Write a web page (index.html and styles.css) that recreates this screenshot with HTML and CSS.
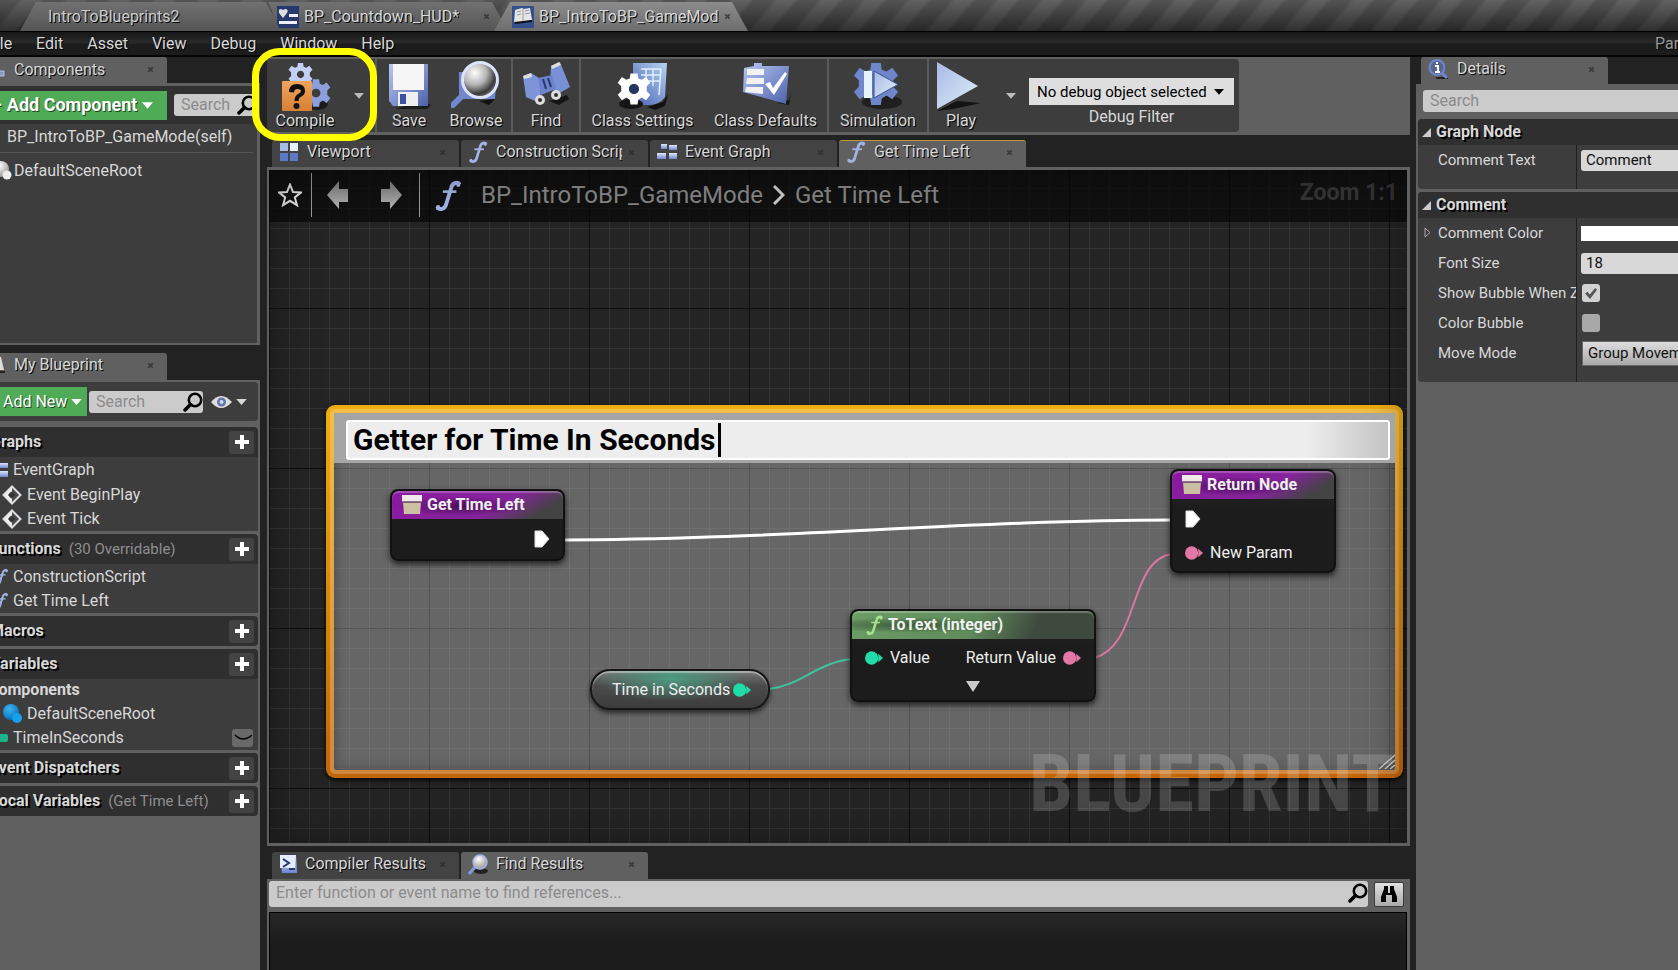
FILE: index.html
```html
<!DOCTYPE html>
<html lang="en">
<head>
<meta charset="utf-8">
<title>Blueprint Editor</title>
<link rel="stylesheet" href="styles.css">
</head>
<body>
<svg class="defs" width="0" height="0" aria-hidden="true">
  <defs>
    <linearGradient id="blue" x1="0" y1="0" x2="1" y2="1"><stop offset="0" stop-color="#b9c9f2"/><stop offset="1" stop-color="#4c61ad"/></linearGradient>
    <linearGradient id="blueDown" x1="0" y1="0" x2="0" y2="1"><stop offset="0" stop-color="#dfe8ff"/><stop offset="1" stop-color="#6d86cf"/></linearGradient>
    <linearGradient id="sheet" x1="0" y1="1" x2="1" y2="0"><stop offset="0" stop-color="#4a60b4"/><stop offset="1" stop-color="#b5d4f0"/></linearGradient>
    <linearGradient id="play" x1="0" y1="0" x2="1" y2="1"><stop offset="0" stop-color="#a9b8e4"/><stop offset="1" stop-color="#dcf0fa"/></linearGradient>
    <linearGradient id="orange" x1="0" y1="0" x2="0" y2="1"><stop offset="0" stop-color="#f0a45c"/><stop offset="1" stop-color="#d77f35"/></linearGradient>
    <linearGradient id="arrow" x1="0" y1="0" x2="0" y2="1"><stop offset="0" stop-color="#777"/><stop offset="1" stop-color="#b5b5b5"/></linearGradient>
    <radialGradient id="lens" cx=".35" cy=".3" r=".75"><stop offset="0" stop-color="#fff"/><stop offset=".45" stop-color="#b5b5b5"/><stop offset=".8" stop-color="#3a3a3a"/><stop offset="1" stop-color="#777"/></radialGradient>
    <radialGradient id="ballGrey" cx=".4" cy=".3" r=".7"><stop offset="0" stop-color="#fff"/><stop offset="1" stop-color="#999"/></radialGradient>
    <radialGradient id="ballBlue" cx=".4" cy=".3" r=".7"><stop offset="0" stop-color="#3cb4f5"/><stop offset="1" stop-color="#0773bd"/></radialGradient>
    <symbol id="close" viewBox="0 0 8 8"><path d="M1.500 1.500l5 5M6.500 1.500l-5 5" stroke="#2a2a2a" stroke-width="2"/></symbol>
    <symbol id="caret" viewBox="0 0 12 8"><path d="M0 1h12L6 8z" fill="currentColor"/></symbol>
    <symbol id="func" viewBox="0 0 20 24"><path d="M19 3.500C18 1.500 13.500 1.500 12.500 6L8.500 19C7.500 23 3.500 23 1.500 21.500" fill="none" stroke="currentColor" stroke-width="3"/><path d="M6 9h10.500" stroke="currentColor" stroke-width="2"/><circle cx="18" cy="3.800" r="1.600" fill="currentColor"/><circle cx="2.300" cy="21" r="1.700" fill="currentColor"/></symbol>
    <symbol id="search" viewBox="0 0 20 20"><circle cx="12" cy="8" r="6.200" fill="none" stroke="#000" stroke-width="2.600"/><path d="M7.500 12.500L2 18" stroke="#000" stroke-width="3.500" stroke-linecap="round"/></symbol>
    <symbol id="gear" viewBox="0 0 48 48"><path fill-rule="evenodd" d="M19 2h10l1 7 5 2 6-4 6 8-5 5 0 7 5 5-6 8-6-4-5 3-1 7H19l-1-7-5-3-6 4-6-8 5-5v-7l-5-5 6-8 6 4 5-2zM24 17a7 7 0 1 0 .1 0z"/></symbol>
    <symbol id="plus" viewBox="0 0 14 14"><path d="M7 0v14M0 7h14" stroke="#fff" stroke-width="4"/></symbol>
    <symbol id="event" viewBox="0 0 20 20"><path d="M10 1.500L18.500 10 10 18.500 1.500 10z" fill="#4a4a4a" stroke="#ddd" stroke-width="2"/><path d="M10 2L2 10l8 8z" fill="#eee"/><path d="M9 6.500L13.500 10 9 13.500 6 10z" fill="#333"/></symbol>
    <symbol id="graph" viewBox="0 0 20 18"><g fill="url(#blueDown)"><rect x="4" y="1" width="6" height="5"/><rect x="12" y="2" width="8" height="5"/><rect x="0" y="10" width="9" height="6"/><rect x="12" y="10" width="8" height="6"/></g></symbol>
    <symbol id="box" viewBox="0 0 20 20"><path d="M0 0h20v6.500H0z" fill="#f0ebe8"/><path d="M1 7.500h18L18 19H2z" fill="#cbc0a2"/><path d="M0 6.500h20v1.200H0z" fill="#6c5a62"/></symbol>
    <symbol id="exec" viewBox="0 0 16 18"><path d="M1 1h7l7 8-7 8H1z" fill="#fff" stroke="#ddd" stroke-width="1"/></symbol>
    <symbol id="pin" viewBox="0 0 19 14"><circle cx="7" cy="7" r="7" fill="currentColor"/><path d="M14 2.500L19 7l-5 4.500z" fill="currentColor"/></symbol>
  </defs>
</svg>

<header class="titlebar">
  <div class="wtab wtab-level"><span>IntroToBlueprints2</span></div>
  <div class="wtab wtab-hud">
    <svg width="22" height="22" viewBox="0 0 22 22"><path d="M0 0h22v22H0z" fill="#27396a"/><path d="M6 12L2 7q-1-4 2-4l2 1 2-1q4 0 2 4z" fill="#ddd"/><path d="M12 8h9v3h-9zM2 15h18v3H2z" fill="#eef"/></svg>
    <span>BP_Countdown_HUD*</span>
    <button class="close" aria-label="Close tab"><svg width="7" height="7"><use href="#close"/></svg></button>
  </div>
  <div class="wtab wtab-mode">
    <svg width="22" height="22" viewBox="0 0 22 22"><path d="M0 0h22v22H0z" fill="#33508d"/><path d="M3 4l7-2 2 1 6-1 2 12-7 1-2 1-9 1z" fill="#e6e6e6"/><path d="M11 3v12M5 6l4-1M5 9l4-1M13 5l4-1M13 8l5-1" stroke="#999"/><path d="M2 16l18-2v2L3 18z" fill="#111"/></svg>
    <span>BP_IntroToBP_GameMod</span>
    <button class="close" aria-label="Close tab"><svg width="7" height="7"><use href="#close"/></svg></button>
  </div>
</header>

<nav class="menubar">
  <a href="#">File</a><a href="#">Edit</a><a href="#">Asset</a><a href="#">View</a><a href="#">Debug</a><a href="#">Window</a><a href="#">Help</a>
  <span class="parent">Parent</span>
</nav>

<main class="workspace">
  <aside class="left">
    <section class="components">
      <div class="ptab ptab-left active">
        <svg width="18" height="20" viewBox="0 0 18 20"><path d="M4 3h7v6H4zM9 11h7v5H9zM6 9v5h4" fill="#8796c5" stroke="#b7c2e5"/></svg>
        <span>Components</span>
        <button class="close" aria-label="Close tab"><svg width="7" height="7"><use href="#close"/></svg></button>
      </div>
      <div class="comp-panel">
        <div class="comp-tools">
          <button class="green add-comp"><span>+</span><span>Add Component</span><svg width="11" height="8"><use href="#caret"/></svg></button>
          <label class="search"><input type="text" placeholder="Search" aria-label="Search components"><svg width="20" height="20"><use href="#search"/></svg></label>
        </div>
        <div class="comp-self">BP_IntroToBP_GameMode(self)</div>
        <div class="comp-root"><svg width="20" height="20" viewBox="0 0 20 20"><circle cx="9" cy="8" r="8" fill="url(#ballGrey)"/><circle cx="15" cy="14" r="4.500" fill="#eee"/></svg>DefaultSceneRoot</div>
      </div>
    </section>

    <section class="myblueprint">
      <div class="ptab ptab-left active">
        <svg width="18" height="20" viewBox="0 0 18 20"><path d="M3 2h10l3 13H3z" fill="#ddd"/><path d="M3 16h14v2H3z" fill="#222"/></svg>
        <span>My Blueprint</span>
        <button class="close" aria-label="Close tab"><svg width="7" height="7"><use href="#close"/></svg></button>
      </div>
      <div class="bp-panel">
        <div class="bp-tools">
          <button class="green add-new"><span>Add New</span><svg width="11" height="7"><use href="#caret"/></svg></button>
          <label class="search"><input type="text" placeholder="Search" aria-label="Search blueprint"><svg width="20" height="20"><use href="#search"/></svg></label>
          <button class="eye" aria-label="View options">
            <svg width="21" height="14" viewBox="0 0 21 14"><path d="M0 7Q10-5 21 7 10 19 0 7z" fill="#ddd"/><circle cx="10.500" cy="7" r="4.500" fill="#6476a8"/><circle cx="10.500" cy="7" r="2" fill="#cfd8f5"/></svg>
            <svg width="11" height="7"><use href="#caret"/></svg>
          </button>
        </div>
        <div class="cat"><b>Graphs</b><button class="plus" aria-label="Add graph"><svg width="14" height="14"><use href="#plus"/></svg></button></div>
        <ul class="rows">
          <li class="lvl1"><svg width="20" height="18"><use href="#graph"/></svg>EventGraph</li>
          <li class="lvl2"><svg width="20" height="20"><use href="#event"/></svg>Event BeginPlay</li>
          <li class="lvl2"><svg width="20" height="20"><use href="#event"/></svg>Event Tick</li>
        </ul>
        <div class="cat"><b>Functions</b><small>(30 Overridable)</small><button class="plus" aria-label="Add function"><svg width="14" height="14"><use href="#plus"/></svg></button></div>
        <ul class="rows rows-func">
          <li class="lvl1"><svg class="fn" width="14" height="18"><use href="#func"/></svg>ConstructionScript</li>
          <li class="lvl1"><svg class="fn" width="14" height="18"><use href="#func"/></svg>Get Time Left</li>
        </ul>
        <div class="cat"><b>Macros</b><button class="plus" aria-label="Add macro"><svg width="14" height="14"><use href="#plus"/></svg></button></div>
        <div class="cat"><b>Variables</b><button class="plus" aria-label="Add variable"><svg width="14" height="14"><use href="#plus"/></svg></button></div>
        <ul class="rows rows-vars">
          <li class="lvl0"><b>Components</b></li>
          <li class="lvl2"><svg width="20" height="20" viewBox="0 0 20 20"><circle cx="9" cy="8" r="8" fill="url(#ballBlue)"/><circle cx="15" cy="14" r="5" fill="#16a0f0"/></svg>DefaultSceneRoot</li>
          <li class="lvl1"><svg width="20" height="8"><rect width="20" height="8" rx="2" fill="#1cb38a"/></svg>TimeInSeconds<button class="lid" aria-label="Toggle visibility"><svg width="18" height="8" viewBox="0 0 18 8"><path d="M1 1q8 8 17 0" fill="none" stroke="#000" stroke-width="1.500"/></svg></button></li>
        </ul>
        <div class="cat"><b>Event Dispatchers</b><button class="plus" aria-label="Add dispatcher"><svg width="14" height="14"><use href="#plus"/></svg></button></div>
        <div class="cat"><b>Local Variables</b><small>(Get Time Left)</small><button class="plus" aria-label="Add local variable"><svg width="14" height="14"><use href="#plus"/></svg></button></div>
      </div>
    </section>
  </aside>

  <section class="center">
    <div class="toolbar">
      <div class="tools">
        <div class="tgroup compile">
          <button class="tool"><svg width="52" height="52" viewBox="2 -2 52 52"><use href="#gear" x="11" y="1" width="25" height="25" fill="#c3cff4"/><ellipse cx="40" cy="43" rx="11" ry="6" fill="#1b1b1b"/><use href="#gear" x="24" y="17" width="30" height="30" fill="#8c9edb"/><rect x="5" y="20" width="30" height="30" rx="1" fill="url(#orange)"/><path d="M12 31q0-8 8-8t8 7q0 4-4.500 6-2 1-2 4h-4q0-5 3.500-7 3-1.500 3-3t-3.500-2q-3.500 0-3.500 3.500z" fill="#111"/><circle cx="19.500" cy="45" r="3" fill="#111"/></svg><span>Compile</span></button>
          <button class="drop" aria-label="Compile options"><svg width="10" height="7"><use href="#caret"/></svg></button>
          <div class="highlight"></div>
        </div>
        <div class="tgroup">
          <button class="tool save"><svg width="48" height="48" viewBox="0 0 48 48"><path d="M38 38l8 4-4 4H10z" fill="#1b1b1b"/><path d="M4 1h39v42H8l-4-5z" fill="url(#blue)"/><path d="M8 1h31v26H8z" fill="#f6f6f6"/><path d="M13 29h20v14H13z" fill="#eee"/><path d="M15 31h6v10h-6z" fill="#3c52a0"/></svg><span>Save</span></button>
          <button class="tool browse"><svg width="50" height="50" viewBox="0 0 50 50"><path d="M28 40l16-2-6 6z" fill="#111"/><path d="M8 11h38l-2 27H8z" fill="#6f87cd"/><path d="M12 34L2 44" stroke="#7189cc" stroke-width="6" stroke-linecap="round"/><circle cx="29" cy="19" r="17.500" fill="url(#lens)" stroke="#dce4fb" stroke-width="3"/></svg><span>Browse</span></button>
        </div>
        <div class="tgroup">
          <button class="tool find"><svg width="50" height="50" viewBox="0 0 50 50"><path d="M28 40l18-6 2 4-10 6z" fill="#151515"/><path d="M2 15l8-3 8 5 2 16-6 7-9-4z" fill="#7d94d8"/><path d="M30 5l9-4 10 25-12 7-8-7z" fill="#7890d6"/><path d="M17 17l14-3 4 14-15 6z" fill="#6b83cc"/><path d="M22 18l3 10M27 17l3 9" stroke="#28386e" stroke-width="2"/><path d="M2 15l8-3 1 4-8 2zM30 5l8-4 2 3-9 4z" fill="#dedede"/><circle cx="19" cy="39" r="5" fill="#ddd"/><circle cx="35" cy="34" r="5" fill="#ddd"/><circle cx="19" cy="39" r="2" fill="#333"/><circle cx="35" cy="34" r="2" fill="#333"/></svg><span>Find</span></button>
        </div>
        <div class="tgroup">
          <button class="tool wide"><svg width="52" height="50" viewBox="0 0 52 50"><path d="M30 46l16-5 5-8-3 12-10 4z" fill="#111"/><path d="M16 2h34l-2 34q-6 8-16 8H16z" fill="url(#sheet)"/><path d="M24 8h20M24 14h19M24 20h19M29 8v17M36 8v17M44 8l-2 26" stroke="#dff0ff" stroke-width="1.500"/><ellipse cx="14" cy="43" rx="12" ry="5" fill="#151515"/><use href="#gear" x="0" y="11" width="34" height="34" fill="#fff"/><circle cx="17" cy="28" r="5" fill="#24365f"/></svg><span>Class Settings</span></button>
          <button class="tool wide"><svg width="50" height="50" viewBox="0 0 50 50"><path d="M36 42l12-3 2-8-2 13z" fill="#151515"/><path d="M3 7l10-2V2h8v3h27l-3 38L2 31z" fill="url(#blue)"/><path d="M6 8h17v6H6zM6 17h17v6H5zM5 26h17v7L4 31z" fill="#f2f2f2"/><path d="M24 23l5-2 3 6 12-16 2 2-13 21z" fill="#fff"/></svg><span>Class Defaults</span></button>
        </div>
        <div class="tgroup">
          <button class="tool sim"><svg width="52" height="52" viewBox="2 -1 52 52"><ellipse cx="32" cy="42" rx="20" ry="7" fill="#1f1f1f"/><use href="#gear" x="2" y="1" width="48" height="46" fill="#6f86cb"/><circle cx="26" cy="24" r="11" fill="#6076ba"/><path d="M14 11h8v27h-8z" fill="#e6f3fa"/><path d="M24 11l24 13.500L24 38z" fill="url(#play)" stroke="#3c528f"/></svg><span>Simulation</span></button>
        </div>
        <div class="tgroup last">
          <button class="tool play"><svg width="48" height="52" viewBox="4 -2 48 52"><path d="M4 50l20-10 24 2-28 6z" fill="#141414"/><path d="M4 1l41 24L4 48z" fill="url(#play)"/></svg><span>Play</span></button>
          <button class="drop" aria-label="Play options"><svg width="10" height="7"><use href="#caret"/></svg></button>
        </div>
        <div class="debug">
          <div class="dselect"><select id="dbg" aria-label="Debug Filter"><option>No debug object selected</option></select><svg width="10" height="7"><use href="#caret"/></svg></div>
          <label for="dbg">Debug Filter</label>
        </div>
      </div>
    </div>

    <div class="tabs graph-tabs">
      <div class="ptab"><svg width="20" height="20" viewBox="0 0 20 20"><path d="M1 1h8v8H1z" fill="#a7bfe4"/><path d="M11 1h8v8h-8z" fill="#e3f2fb"/><path d="M1 11h8v8H1zM11 11h8v8h-8z" fill="#5d78c4"/></svg><span>Viewport</span><button class="close" aria-label="Close tab"><svg width="7" height="7"><use href="#close"/></svg></button></div>
      <div class="ptab"><svg class="fn" width="20" height="22"><use href="#func"/></svg><span>Construction Script</span><button class="close" aria-label="Close tab"><svg width="7" height="7"><use href="#close"/></svg></button></div>
      <div class="ptab"><svg width="20" height="18"><use href="#graph"/></svg><span>Event Graph</span><button class="close" aria-label="Close tab"><svg width="7" height="7"><use href="#close"/></svg></button></div>
      <div class="ptab active gold"><svg class="fn" width="20" height="22"><use href="#func"/></svg><span>Get Time Left</span><button class="close" aria-label="Close tab"><svg width="7" height="7"><use href="#close"/></svg></button></div>
    </div>

    <div class="graph">
      <div class="comment">
        <div class="comment-bar"><input type="text" value="Getter for Time In Seconds" aria-label="Comment title"><i class="text-caret"></i></div>
        <svg class="grip" width="18" height="16" viewBox="0 0 18 16"><path d="M1 15L17 1M7 15L17 6M12 15l5-4" stroke="#bbb" stroke-width="1.500"/></svg>
      </div>
      <svg class="wires" width="1140" height="673" viewBox="269 170 1140 673" fill="none">
        <path d="M564 540C760 540 980 520 1172 520" stroke="#fff" stroke-width="3"/>
        <path d="M1094 658C1140 646 1128 560 1172 554" stroke="#d8779f" stroke-width="2"/>
        <path d="M769 689C800 686 818 662 852 659" stroke="#3fc39d" stroke-width="2"/>
      </svg>
      <div class="node node-entry purple">
        <div class="node-head"><svg width="20" height="20"><use href="#box"/></svg>Get Time Left</div>
        <div class="pins end"><svg width="16" height="18"><use href="#exec"/></svg></div>
      </div>
      <div class="node node-return purple">
        <div class="node-head"><svg width="20" height="20"><use href="#box"/></svg>Return Node</div>
        <div class="pins"><svg width="16" height="18"><use href="#exec"/></svg></div>
        <div class="pins"><svg class="pink" width="18" height="14"><use href="#pin"/></svg>New Param</div>
      </div>
      <div class="node node-text leaf">
        <div class="node-head"><svg width="17" height="20"><use href="#func"/></svg>ToText (integer)</div>
        <div class="pins both"><svg class="teal" width="18" height="14"><use href="#pin"/></svg><span>Value</span><span class="ret">Return Value</span><svg class="pink" width="18" height="14"><use href="#pin"/></svg></div>
        <div class="expand"><svg width="14" height="11" viewBox="0 0 14 11"><path d="M0 0h14L7 11z" fill="#ccc"/></svg></div>
      </div>
      <div class="var-node">Time in Seconds<svg class="teal" width="18" height="14"><use href="#pin"/></svg></div>
      <div class="crumbs">
        <svg width="24" height="24" viewBox="0 0 24 24"><path d="M12 1.500l3 7.500 8 .4-6.200 5 2.200 7.800-7-4.400-7 4.400 2.200-7.800L1 9.400 9 9z" fill="none" stroke="#e6e6e6" stroke-width="2"/></svg>
        <i class="bar"></i>
        <button class="nav" aria-label="Back"><svg width="22" height="28" viewBox="0 0 22 28"><path d="M0 14L12 0v8h9v13h-9v7z" fill="url(#arrow)"/></svg></button>
        <button class="nav" aria-label="Forward"><svg width="22" height="28" viewBox="0 0 22 28"><path d="M22 14L10 0v8H1v13h9v7z" fill="url(#arrow)"/></svg></button>
        <i class="bar bar2"></i>
        <svg class="fn" width="26" height="31"><use href="#func"/></svg>
        <a href="#">BP_IntroToBP_GameMode</a>
        <svg class="chev" width="12" height="20" viewBox="0 0 12 20"><path d="M1 1l9 9-9 9" fill="none" stroke="#ccc" stroke-width="3"/></svg>
        <a href="#">Get Time Left</a>
        <b>Zoom 1:1</b>
      </div>
      <div class="watermark">BLUEPRINT</div>
    </div>

    <div class="tabs result-tabs">
      <div class="ptab"><svg width="18" height="20" viewBox="0 0 18 20"><path d="M1 1h16l1 18H3z" fill="url(#blueDown)"/><path d="M1 1h15v13H1z" fill="#e3edff"/><path d="M4 5l6 4-6 4M10 15h6" fill="none" stroke="#22386e" stroke-width="2"/></svg><span>Compiler Results</span><button class="close" aria-label="Close tab"><svg width="7" height="7"><use href="#close"/></svg></button></div>
      <div class="ptab active"><svg width="20" height="21" viewBox="0 0 20 21"><ellipse cx="13" cy="17" rx="7" ry="3" fill="#222"/><path d="M7 13l-6 7" stroke="#8298d8" stroke-width="3"/><circle cx="12" cy="8" r="7" fill="url(#ballGrey)" stroke="#a3b3e4" stroke-width="1.500"/></svg><span>Find Results</span><button class="close" aria-label="Close tab"><svg width="7" height="7"><use href="#close"/></svg></button></div>
    </div>
    <div class="results">
      <div class="results-bar">
        <label class="search"><input type="text" placeholder="Enter function or event name to find references..." aria-label="Find references"><svg width="20" height="20"><use href="#search"/></svg></label>
        <button class="bino" aria-label="Find in all blueprints"><svg width="16" height="16" viewBox="0 0 16 16"><path d="M3 0h4v7h2V0h4v3l3 8v5h-5V9H5v7H0v-5l3-8z" fill="#000"/></svg></button>
      </div>
      <div class="results-list"></div>
    </div>
  </section>

  <aside class="right">
    <div class="ptab ptab-details active"><svg width="21" height="21" viewBox="0 0 21 21"><path d="M7 18h13v2H9z" fill="#222"/><path d="M13 13l6 6" stroke="#6d84cf" stroke-width="3"/><circle cx="9" cy="8.500" r="7.500" fill="#59648a" stroke="#6e85d3" stroke-width="2"/><path d="M7 7h3v6M7 13h5M8 4h2" stroke="#fff" stroke-width="2" fill="none"/></svg><span>Details</span><button class="close" aria-label="Close tab"><svg width="7" height="7"><use href="#close"/></svg></button></div>
    <div class="details">
      <label class="search"><input type="text" placeholder="Search" aria-label="Search details"></label>
      <section class="dcat">
        <h2><svg width="9" height="9" viewBox="0 0 9 9"><path d="M9 0v9H0z" fill="#ccc"/></svg>Graph Node</h2>
        <div class="drow tall"><label for="ct">Comment Text</label><div><input id="ct" class="field" type="text" value="Comment"></div></div>
      </section>
      <section class="dcat">
        <h2><svg width="9" height="9" viewBox="0 0 9 9"><path d="M9 0v9H0z" fill="#ccc"/></svg>Comment</h2>
        <div class="drow"><label for="cc"><svg class="tri" width="7" height="11" viewBox="0 0 7 11"><path d="M1 1l5 4.500L1 10z" fill="none" stroke="#aaa"/></svg>Comment Color</label><div><button id="cc" class="swatch"></button></div></div>
        <div class="drow"><label for="fs">Font Size</label><div><input id="fs" class="field" type="text" value="18"></div></div>
        <div class="drow"><label for="sb">Show Bubble When Zoomed</label><div><input id="sb" type="checkbox" checked></div></div>
        <div class="drow"><label for="cb">Color Bubble</label><div><input id="cb" type="checkbox"></div></div>
        <div class="drow tall"><label for="mm">Move Mode</label><div><select id="mm" class="mode"><option>Group Movement</option></select></div></div>
      </section>
    </div>
  </aside>
</main>
</body>
</html>
```
FILE: styles.css
```css
* { box-sizing: border-box; }
body {
  margin: 0; height: 100vh; overflow: hidden;
  display: flex; flex-direction: column;
  background: #222; color: #d8d8d8;
  font: 16px/20px Roboto, "Liberation Sans", sans-serif;
}
.defs { position: absolute; }
button, input, select { font: inherit; color: inherit; margin: 0; border: 0; padding: 0; background: none; border-radius: 0; }
select { appearance: none; }
a { color: inherit; text-decoration: none; }
svg { flex: none; display: block; }
ul { list-style: none; margin: 0; padding: 0; }
.fn { color: #a3b3e6; }
.pink { color: #e377a6; }
.teal { color: #20dca8; }

/* Window tabs */
.titlebar {
  flex: none; height: 32px; padding: 2px 0 0 20px; display: flex;
  border-bottom: 1px solid #000;
  background:
    linear-gradient(rgba(255,255,255,.1), rgba(0,0,0,.4)),
    repeating-linear-gradient(130deg, #404040 0 14px, #505050 18px 30px, #404040 34px);
}
.wtab {
  display: flex; align-items: center; gap: 5px; height: 29px; margin-right: -14px;
  background: linear-gradient(#717171, #555);
  clip-path: polygon(16px 0, 18px 0, calc(100% - 16px) 0, 100% 100%, 0 100%);
  text-shadow: 1px 1px #000; white-space: nowrap;
}
.wtab .close { margin-left: auto; }
.wtab-level { width: 262px; padding-left: 28px; color: #ccc; }
.wtab-hud { width: 240px; padding: 0 18px 0 9px; clip-path: polygon(0 0, calc(100% - 16px) 0, 100% 100%, 12px 100%); }
.wtab-mode { width: 254px; padding: 0 24px 0 18px; background: linear-gradient(#8c8c8c, #6d6d6d); }
.close { display: flex; opacity: .7; }

.menubar {
  flex: none; height: 25px; display: flex; align-items: center; gap: 24px;
  margin-left: -13px; overflow: hidden;
  background: linear-gradient(#161616, #2a2a2a 45%, #1c1c1c 55%, #1c1c1c);
  border-bottom: 2px solid #050505; text-shadow: 1px 1px #000;
}
.parent { margin-left: auto; width: 23px; color: #999; }

.workspace { flex: 1; min-height: 0; display: grid; grid-template-columns: 260px minmax(0, 1fr) 262px; }

/* Dock tabs */
.ptab {
  display: flex; align-items: center; gap: 6px; height: 27px; width: 187px;
  padding: 0 13px 3px 7px; border-radius: 3px 3px 0 0;
  background: #434343; text-shadow: 1px 1px #000; white-space: nowrap;
}
.ptab svg + span { margin-left: 2px; }
.ptab span { flex: 1; min-width: 0; overflow: hidden; }
.ptab.active { background: #606060; }
.ptab.gold { border-top: 1px solid #bb9a3e; padding-bottom: 4px; }
.ptab-left { margin-left: -20px; padding-left: 8px; }
.tabs { display: flex; gap: 2px; padding-left: 5px; flex: none; }

/* Search boxes */
.search { display: flex; align-items: center; background: #cbcbcb; border-radius: 3px; height: 22px; }
.search input { flex: 1; min-width: 0; padding: 0 7px; color: #111; }
.search input::placeholder { color: #8b8b8b; opacity: 1; }

/* Left column */
.left { display: flex; flex-direction: column; min-height: 0; overflow: hidden; }
.components .ptab { height: 26px; padding-bottom: 1px; }
.comp-panel { height: 262px; background: #3d3d3d; border: solid #606060; border-width: 3px 3px 2px 0; }
.comp-tools { display: flex; align-items: center; gap: 7px; height: 38px; background: #313131; }
.green { display: flex; align-items: center; height: 29px; background: #4fab55; color: #fff; text-shadow: 1px 1px #1f4a22; white-space: nowrap; }
.add-comp { flex: none; width: 183px; margin-left: -16px; padding-left: 8px; gap: 5px; font-size: 18px; font-weight: 700; }
.comp-tools .search { flex: 1; min-width: 0; }
.comp-self { height: 29px; line-height: 26px; margin-right: 4px; padding-left: 7px; border-bottom: 1px solid #555; }
.comp-root { display: flex; align-items: center; height: 35px; margin-left: -8px; gap: 2px; }
.myblueprint { display: flex; flex-direction: column; flex: 1; min-height: 0; margin-top: 8px; }
.bp-panel { flex: 1; background: #606060; padding: 2px 2px 0 0; }
.bp-tools { display: flex; align-items: center; height: 39px; margin-bottom: 6px; background: #3d3d3d; border-radius: 0 4px 4px 0; }
.add-new { flex: none; width: 87px; padding-left: 3px; gap: 4px; }
.bp-tools .search { width: 114px; margin: 0 8px 0 2px; }
.eye { display: flex; align-items: center; gap: 4px; }
.cat {
  display: flex; align-items: center; height: 30px; margin: 0 0 3px -10px; padding-right: 4px;
  background: #2f2f2f; border-radius: 0 4px 4px 0; text-shadow: 2px 2px #000; white-space: nowrap;
}
.cat:has(+ .rows) { margin-bottom: 0; border-radius: 0 4px 0 0; }
.cat small { font-size: 15px; color: #8e8e8e; margin-left: 8px; text-shadow: none; }
.plus { display: flex; align-items: center; justify-content: center; width: 25px; height: 23px; margin-left: auto; background: #434343; border-radius: 3px; }
.rows { background: #3d3d3d; margin-bottom: 3px; }
.rows li { display: flex; align-items: center; height: 25px; gap: 5px; white-space: nowrap; }
.rows li:last-child { height: 24px; }
.rows-vars li:first-child { height: 22px; }
.lvl0 { margin-left: -12px; }
.lvl1 { margin-left: -12px; }
.lvl2 { margin-left: 2px; }
.lvl1 .fn { margin-left: 6px; }
.lid { display: flex; align-items: center; justify-content: center; width: 21px; height: 18px; margin: 0 5px 0 auto; background: #696969; border-radius: 3px; }

/* Center column */
.center { display: flex; flex-direction: column; min-width: 0; margin: 0 6px 0 7px; }
.toolbar { flex: none; height: 78px; background: #606060; padding: 2px 0 3px; margin-bottom: 5px; }
.tools { display: flex; height: 73px; width: 972px; max-width: 100%; background: #3d3d3d; border-radius: 3px 4px 4px 3px; }
.tgroup { display: flex; position: relative; border-right: 2px solid #5a5a5a; }
.tgroup.last { border-right: 0; }
.tool { display: flex; flex-direction: column; align-items: center; justify-content: flex-end; height: 73px; text-shadow: 1px 1px #000; white-space: nowrap; }
.tool span { margin-top: -1px; line-height: 22px; }
.compile .tool { width: 76px; }
.compile .drop { width: 32px; }
.save { width: 64px; }
.browse { width: 70px; }
.find { width: 66px; }
.wide { width: 123px; }
.sim { width: 98px; }
.play { width: 64px; }
.drop { display: flex; align-items: center; justify-content: center; width: 36px; color: #bbb; }
.highlight { position: absolute; left: -15px; top: -11px; width: 125px; height: 93px; border: 7px solid #ff0; border-radius: 28px; z-index: 5; pointer-events: none; }
.debug { display: flex; flex-direction: column; align-items: center; gap: 2px; width: 205px; padding-top: 19px; }
.dselect { position: relative; width: 100%; color: #000; }
.dselect select { width: 100%; height: 27px; padding-left: 8px; background: #dedede; font-size: 15px; }
.dselect svg { position: absolute; right: 10px; top: 10px; }

.graph {
  position: relative; flex: 1; min-height: 0; overflow: hidden; border: 3px solid #606060; border-width: 3px 3px 3px 2px;
  background:
    linear-gradient(90deg, #0e0e0e 1px, transparent 1px) 0 0 / 160px 100%,
    linear-gradient(#0e0e0e 1px, transparent 1px) 0 138px / 100% 160px,
    linear-gradient(90deg, #333 1px, transparent 1px) 0 0 / 20px 100%,
    linear-gradient(#333 1px, transparent 1px) 0 18px / 100% 20px,
    #242424;
}
.graph::after { content: ""; position: absolute; inset: 0; box-shadow: inset 0 0 50px rgba(0,0,0,.35); pointer-events: none; }
.crumbs {
  position: absolute; inset: 0 0 auto 0; height: 52px; display: flex; align-items: center;
  padding: 0 9px 2px; background: rgba(8,8,8,.72); font-size: 24px; color: #868686; white-space: nowrap;
}
.bar { width: 1px; height: 44px; background: #999; margin: 0 15px 0 9px; }
.nav + .nav { margin-left: 31px; }
.bar2 { margin: 0 15px 0 17px; }
.crumbs .fn { margin-right: 20px; }
.chev { margin: 0 10px; }
.crumbs b { margin-left: auto; padding-bottom: 4px; color: #353535; font-size: 23px; }

.comment {
  position: absolute; left: 57px; top: 235px; right: 4px; height: 373px;
  border-radius: 9px; padding: 8px;
  background: linear-gradient(#f0ae12, #c26509);
  box-shadow: 0 2px 5px #000;
}
.comment::before {
  content: ""; position: absolute; inset: 4px; border-radius: 5px;
  background: rgba(255,255,255,.22);
}
.comment::after {
  content: ""; position: absolute; inset: 8px; border-radius: 2px;
  background:
    linear-gradient(90deg, #535353 1px, transparent 1px) 95px 0 / 160px 100%,
    linear-gradient(#535353 1px, transparent 1px) 0 55px / 100% 160px,
    linear-gradient(90deg, #707070 1px, transparent 1px) 15px 0 / 20px 100%,
    linear-gradient(#707070 1px, transparent 1px) 0 15px / 100% 20px,
    #666;
  box-shadow: inset 0 0 12px rgba(0,0,0,.3);
}
.comment-bar { position: relative; z-index: 1; height: 50px; padding: 7px 5px 3px 12px; background: #a5a5a5; }
.comment-bar input {
  width: 100%; height: 40px; padding: 0 5px 2px; border: 2px solid #fff; border-radius: 3px;
  background: linear-gradient(90deg, #ededed calc(100% - 80px), #c4c4c4); color: #000;
  font-size: 30px; font-weight: 700;
}
.text-caret { position: absolute; left: 384px; top: 10px; width: 3px; height: 34px; background: #000; }
.grip { position: absolute; right: 7px; bottom: 8px; z-index: 1; }
.wires { position: absolute; left: 0; top: 0; }

.node {
  position: absolute; border: 2px solid #111; border-radius: 8px; overflow: hidden; color: #eee;
  background: linear-gradient(#252625, #1b1c1b 40%); box-shadow: 0 3px 6px rgba(0,0,0,.7); white-space: nowrap;
}
.node-head { display: flex; align-items: center; gap: 5px; height: 28px; padding: 0 0 1px 10px; font-weight: 700; box-shadow: inset 0 2px 1px rgba(255,255,255,.25); border-radius: 6px 6px 0 0; }
.purple .node-head { background: radial-gradient(ellipse at 40% 55%, rgba(50,5,60,.7), transparent 45%), linear-gradient(150deg, #8a18a0, #86249c 60%, #434343 85%); }
.leaf .node-head { background: radial-gradient(ellipse at 25% 50%, #3b5a38, transparent 40%), linear-gradient(115deg, #6d9d66, #5f8c5b 50%, #3f4a3f 75%); color: #f0f0f0; padding-left: 14px; }
.leaf .node-head svg { color: #a7e28f; }
.node-entry { left: 121px; top: 319px; width: 175px; height: 72px; }
.node-return { left: 901px; top: 299px; width: 166px; height: 104px; }
.node-text { left: 581px; top: 439px; width: 246px; height: 93px; }
.pins { display: flex; align-items: center; gap: 7px; height: 34px; padding: 6px 13px 0; }
.pins.end { justify-content: flex-end; }
.node-return .pins + .pins { padding-top: 5px; }
.node-text .pins { padding-top: 4px; }
.node-text .ret { margin-left: auto; }
.expand { display: flex; justify-content: center; padding-top: 8px; }
.var-node {
  position: absolute; left: 321px; top: 499px; width: 180px; height: 41px; border-radius: 20px;
  display: flex; align-items: center; gap: 3px; padding-left: 20px; color: #eee; white-space: nowrap;
  border: 2px solid #161616; background: radial-gradient(ellipse at 45% 20%, #4b9a80, rgba(75,154,128,.2) 45%, transparent 55%), linear-gradient(#777, #4b4b4b 40%, #3c3c3c);
  box-shadow: 0 3px 5px rgba(0,0,0,.6), inset 0 2px 1px rgba(255,255,255,.4);
}
.watermark {
  position: absolute; right: 13px; bottom: 19px; color: rgba(255,255,255,.17);
  font: 700 79px/80px "Roboto Condensed", "Liberation Sans Narrow", Roboto, sans-serif;
}

.result-tabs { margin-top: 6px; }
.results { flex: none; height: 91px; display: flex; flex-direction: column; background: #606060; padding: 2px 3px 0 2px; }
.results-bar { display: flex; align-items: center; gap: 6px; padding-right: 3px; margin-bottom: 5px; }
.results-bar .search { flex: 1; height: 26px; padding-bottom: 2px; }
.bino { display: flex; align-items: center; justify-content: center; width: 30px; height: 25px; border: 1px solid #3a3a3a; border-radius: 2px; background: linear-gradient(#e0e0e0, #aaa); }
.results-list { flex: 1; border: 1px solid #000; border-bottom: 0; background: linear-gradient(#282828, #1b1b1b 50%); }

/* Details */
.right { display: flex; flex-direction: column; min-width: 0; overflow: hidden; }
.ptab-details { margin-left: 5px; }
.details { flex: 1; background: #606060; padding: 6px 0 0 2px; }
.details .search { margin: 0 0 7px 5px; border-radius: 3px 0 0 3px; }
.dcat { background: #3d3d3d; border-radius: 4px 0 0 4px; margin-bottom: 3px; overflow: hidden; }
.dcat h2 { display: flex; align-items: center; gap: 5px; height: 26px; margin: 0; padding-left: 4px; background: #2f2f2f; font-size: 16px; line-height: 20px; text-shadow: 2px 2px #000; }
.drow { display: grid; grid-template-columns: 158px 1fr; min-height: 30px; font-size: 15px; white-space: nowrap; }
.drow label { display: flex; align-items: center; height: 30px; padding: 0 0 1px 20px; overflow: hidden; }
.drow > div { display: flex; align-items: center; height: 30px; padding-left: 4px; border-left: 1px solid #1f1f1f; }
.drow.tall > div { height: 44px; padding-bottom: 14px; }
.tri { margin: 0 7px 0 -14px; }
.field { flex: 1; min-width: 0; height: 21px; padding: 0 5px; background: #d8d8d8; color: #111; border-radius: 3px 0 0 3px; }
.swatch { flex: 1; height: 15px; background: #fff; }
.drow input[type=checkbox] { appearance: none; width: 18px; height: 18px; margin-left: 1px; border-radius: 3px; background: #a8a8a8; }
.drow input[type=checkbox]:checked { background: #d2d2d2; }
.drow input[type=checkbox]:checked::before { content: ""; display: block; width: 12px; height: 11px; margin: 4px 3px; background: #555; clip-path: polygon(0 50%, 20% 35%, 40% 60%, 85% 0, 100% 15%, 42% 100%); }
.mode { flex: 1; min-width: 0; height: 25px; margin-left: 1px; padding-left: 5px; color: #111; background: linear-gradient(#ddd, #a9a9a9); border: 1px solid #666; border-right: 0; }
```
